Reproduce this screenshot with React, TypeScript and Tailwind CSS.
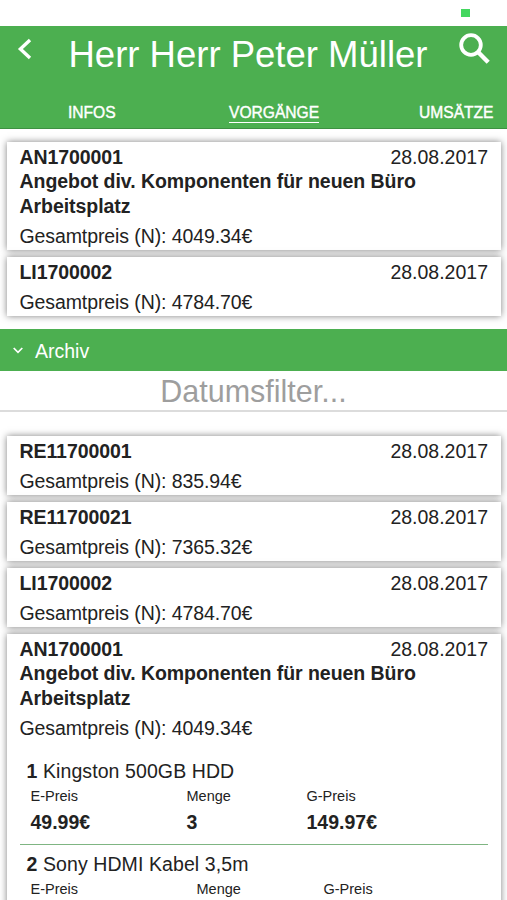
import React from 'react';

type Item = { name: string; unit?: string; amount?: string; sum?: string; cols: string };
type Doc = { number: string; title?: string; date: string; total: string; items?: Item[] };

const openDocs: Doc[] = [
  {
    number: 'AN1700001',
    title: 'Angebot div. Komponenten für neuen Büro Arbeitsplatz',
    date: '28.08.2017',
    total: '4049.34€',
  },
  { number: 'LI1700002', date: '28.08.2017', total: '4784.70€' },
];

const archivedDocs: Doc[] = [
  { number: 'RE11700001', date: '28.08.2017', total: '835.94€' },
  { number: 'RE11700021', date: '28.08.2017', total: '7365.32€' },
  { number: 'LI1700002', date: '28.08.2017', total: '4784.70€' },
  {
    number: 'AN1700001',
    title: 'Angebot div. Komponenten für neuen Büro Arbeitsplatz',
    date: '28.08.2017',
    total: '4049.34€',
    items: [
      { name: 'Kingston 500GB HDD', unit: '49.99€', amount: '3', sum: '149.97€', cols: 'grid-cols-[156px_120px_1fr]' },
      { name: 'Sony HDMI Kabel 3,5m', cols: 'grid-cols-[166px_127px_1fr]' },
    ],
  },
];

const Cell = ({ label, value }: { label: string; value?: string }) => (
  <div>
    <div className="text-[14.5px] leading-[18px]">{label}</div>
    {value && <div className="mt-[5px] text-[19.5px] font-bold leading-[24.5px]">{value}</div>}
  </div>
);

const ItemRow = ({ item, position }: { item: Item; position: number }) => (
  <div className="h-[93px] border-b border-[#7fb582] pt-[7px]">
    <div className="pl-[7px] tracking-[0.09px]">
      <b>{position}</b> {item.name}
    </div>
    <div className={`grid pl-[11px] pt-[3.5px] ${item.cols}`}>
      <Cell label="E-Preis" value={item.unit} />
      <Cell label="Menge" value={item.amount} />
      <Cell label="G-Preis" value={item.sum} />
    </div>
  </div>
);

const DocCard = ({ doc }: { doc: Doc }) => (
  <div className="bg-white pb-[1.5px] pl-[13px] pr-[12.5px] pt-[3px] shadow-[0_0_7px_rgba(0,0,0,0.5)]">
    <div className="flex justify-between">
      <b className="tracking-[-0.08px]">{doc.number}</b>
      <span>{doc.date}</span>
    </div>
    {doc.title && <div className="w-[420px] font-bold tracking-[-0.05px]">{doc.title}</div>}
    <div className="mt-[6px] tracking-[-0.1px]">Gesamtpreis (N): {doc.total}</div>
    {doc.items && (
      <div className="mt-[11px]">
        {doc.items.map((item, index) => (
          <ItemRow key={index} item={item} position={index + 1} />
        ))}
      </div>
    )}
  </div>
);

const DocList = ({ docs }: { docs: Doc[] }) => (
  <div className="flex flex-col gap-[6.5px] px-[6.5px]">
    {docs.map((doc, index) => (
      <DocCard key={index} doc={doc} />
    ))}
  </div>
);

const tabStyle = 'text-[15.6px] leading-[18px] [-webkit-text-stroke:0.4px_white]';

export default function App() {
  return (
    <div className="h-[900px] w-[507px] overflow-hidden bg-white font-['Liberation_Sans',Arial,sans-serif] text-[19.5px] leading-[24.5px] text-[#222]">
      <div className="flex h-[25.5px] justify-end pr-[37px] pt-[9px]">
        <div className="h-[8px] w-[9px] bg-[#43d75f]" />
      </div>
      <header className="flex h-[103.5px] flex-col border-b border-[#3d9142] bg-[#4caf50] text-white">
        <div className="flex h-[58px] items-center pl-[17px]">
          <svg className="mb-[11px] h-[22px] w-[15px]" viewBox="0 0 15 22" fill="none" stroke="currentColor" strokeWidth="3.4">
            <path d="M13 2 L3.4 11 L13 20" />
          </svg>
          <h1 className="ml-[36.5px] w-[390px] whitespace-nowrap text-[36.5px] leading-[44px]">Herr Herr Peter Müller</h1>
          <svg className="mb-[12px] h-[31px] w-[31px]" viewBox="0 0 31 31" fill="none" stroke="currentColor">
            <circle cx="12" cy="12" r="9.8" strokeWidth="3.8" />
            <path d="M19 19 L29.2 29.2" strokeWidth="4.4" />
          </svg>
        </div>
        <nav className="mt-[20px] grid grid-cols-[161px_190px_1fr] items-start justify-items-start pl-[68px]">
          <span className={tabStyle}>INFOS</span>
          <span className={`border-b border-white ${tabStyle}`}>VORGÄNGE</span>
          <span className={tabStyle}>UMSÄTZE</span>
        </nav>
      </header>
      <div className="pt-[12.5px]">
        <DocList docs={openDocs} />
      </div>
      <div className="mt-[12.5px] flex h-[42.5px] items-center bg-[#4caf50] pl-[13px] pt-[2px] text-white">
        <svg className="mr-[12px] h-[7px] w-[10px]" viewBox="0 0 10 7" fill="none" stroke="currentColor" strokeWidth="1.7">
          <path d="M0.7 1 L5 5.4 L9.3 1" />
        </svg>
        Archiv
      </div>
      <div className="flex h-[40.5px] items-center justify-center border-b-2 border-[#dcdcdc] pt-[1px] text-[30.5px] text-[#9e9e9e]">
        Datumsfilter...
      </div>
      <div className="pt-[24.2px]">
        <DocList docs={archivedDocs} />
      </div>
    </div>
  );
}
